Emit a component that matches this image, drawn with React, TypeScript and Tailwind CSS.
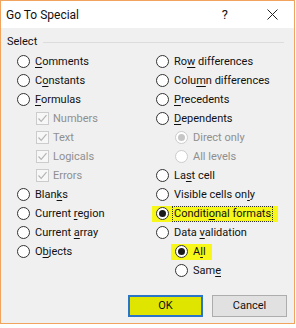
import React from 'react';

type Item = {
  label: string;
  key?: number; // index of the underlined access-key letter
  kind: 'radio' | 'check' | 'sub';
  checked?: boolean;
  disabled?: boolean;
  hl?: boolean;
  focus?: boolean;
};

const leftItems: Item[] = [
  { label: 'Comments', key: 0, kind: 'radio' },
  { label: 'Constants', key: 1, kind: 'radio' },
  { label: 'Formulas', key: 0, kind: 'radio' },
  { label: 'Numbers', kind: 'check', checked: true, disabled: true },
  { label: 'Text', kind: 'check', checked: true, disabled: true },
  { label: 'Logicals', kind: 'check', checked: true, disabled: true },
  { label: 'Errors', kind: 'check', checked: true, disabled: true },
  { label: 'Blanks', key: 4, kind: 'radio' },
  { label: 'Current region', key: 8, kind: 'radio' },
  { label: 'Current array', key: 8, kind: 'radio' },
  { label: 'Objects', key: 1, kind: 'radio' },
];

const rightItems: Item[] = [
  { label: 'Row differences', key: 2, kind: 'radio' },
  { label: 'Column differences', key: 4, kind: 'radio' },
  { label: 'Precedents', key: 0, kind: 'radio' },
  { label: 'Dependents', key: 0, kind: 'radio' },
  { label: 'Direct only', kind: 'sub', checked: true, disabled: true },
  { label: 'All levels', kind: 'sub', disabled: true },
  { label: 'Last cell', key: 2, kind: 'radio' },
  { label: 'Visible cells only', key: 16, kind: 'radio' },
  { label: 'Conditional formats', key: 7, kind: 'radio', checked: true, hl: true, focus: true },
  { label: 'Data validation', key: 5, kind: 'radio' },
  { label: 'All', key: 1, kind: 'sub', checked: true, hl: true },
  { label: 'Same', key: 3, kind: 'sub' },
];

function Label({ text, k }: { text: string; k?: number }) {
  if (k === undefined) return <>{text}</>;
  return (
    <>
      {text.slice(0, k)}
      <span className="underline underline-offset-2">{text[k]}</span>
      {text.slice(k + 1)}
    </>
  );
}

function Radio({ checked, disabled }: { checked?: boolean; disabled?: boolean }) {
  return (
    <span
      className={`flex h-[13px] w-[13px] shrink-0 items-center justify-center rounded-full border bg-white ${
        disabled ? 'border-[#cccccc]' : 'border-[#333333]'
      }`}
    >
      {checked && (
        <span className={`h-[7px] w-[7px] rounded-full ${disabled ? 'bg-[#c6c6c6]' : 'bg-[#1a1a1a]'}`} />
      )}
    </span>
  );
}

function Check({ checked }: { checked?: boolean }) {
  return (
    <span className="flex h-[13px] w-[13px] shrink-0 items-center justify-center border border-[#cccccc] bg-[#f7f7f7]">
      {checked && (
        <svg width="11" height="11" viewBox="0 0 11 11">
          <path d="M1.5 5.5 L4.2 8.3 L9.5 2.2" fill="none" stroke="#b4b4b4" strokeWidth="1.2" />
        </svg>
      )}
    </span>
  );
}

function Row({ item }: { item: Item }) {
  const indent = item.kind === 'check' ? 'pl-[19px]' : item.kind === 'sub' ? 'pl-[19px]' : '';
  const text = item.disabled ? 'text-[#8f8f8f]' : 'text-[#111111]';
  return (
    <div className={`flex h-[19px] items-center whitespace-nowrap ${indent}`}>
      <div
        className={`flex items-center gap-[5px] ${item.hl ? 'bg-[#f7f71a] -ml-[4px] pl-[4px] pr-[6px] h-[16px]' : ''}`}
      >
        {item.kind === 'check' ? <Check checked={item.checked} /> : <Radio checked={item.checked} disabled={item.disabled} />}
        <span
          className={`${text} leading-[14px] ${item.kind === 'check' ? 'ml-[-1px]' : ''} ${
            item.focus ? 'outline outline-1 outline-dotted outline-[#333333] px-[1px] -ml-[1px]' : ''
          }`}
        >
          <Label text={item.label} k={item.key} />
        </span>
      </div>
    </div>
  );
}

export default function App() {
  return (
    <div
      className="h-[328px] w-[296px] overflow-hidden bg-white text-[11px]"
      style={{ fontFamily: 'Roboto, "Liberation Sans", sans-serif' }}
    >
      <div className="flex h-[324px] w-[295px] flex-col border border-[#f1a45e] bg-[#f0f0f0]">
        {/* title bar */}
        <div className="flex h-[27px] shrink-0 items-center bg-white pl-[5px] text-[#111111]">
          <span className="text-[12px]">Go To Special</span>
          <span className="ml-auto mr-[39px] text-[13px]">?</span>
          <svg width="11" height="11" viewBox="0 0 11 11" className="mr-[16px]">
            <path d="M0.5 0.5 L10.5 10.5 M10.5 0.5 L0.5 10.5" stroke="#222222" strokeWidth="1" />
          </svg>
        </div>

        <div className="flex flex-1 flex-col px-[6px] pt-[4px]">
          <div className="flex h-[20px] items-center gap-[6px] text-[#111111]">
            <span>Select</span>
            <span className="h-px flex-1 bg-[#dcdcdc] mr-[4px]" />
          </div>

          <div className="grid grid-cols-[139px_1fr] pl-[10px]">
            <div className="flex flex-col">
              {leftItems.map((it) => (
                <Row key={it.label} item={it} />
              ))}
            </div>
            <div className="flex flex-col">
              {rightItems.map((it) => (
                <Row key={it.label} item={it} />
              ))}
            </div>
          </div>

          <div className="mt-[15px] flex justify-end gap-[9px] pr-[1px]">
            <button className="h-[22px] w-[75px] border-2 border-[#2a74c9] bg-[#e0e500] text-[#111111]">OK</button>
            <button className="h-[22px] w-[75px] border border-[#adadad] bg-[#e1e1e1] text-[#111111]">Cancel</button>
          </div>
        </div>
      </div>
    </div>
  );
}
